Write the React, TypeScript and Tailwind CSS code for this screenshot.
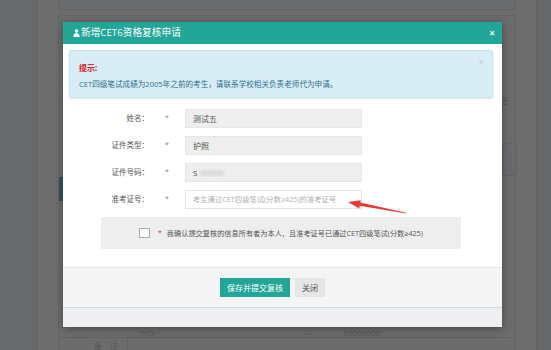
import React from "react";

const font = "font-['Open_Sans','Noto_Sans_CJK_SC',sans-serif]";

function UserIcon() {
  return (
    <svg width="7" height="8" viewBox="0 0 7 8" className="shrink-0">
      <circle cx="3.5" cy="2" r="1.8" fill="#ffffff" />
      <path d="M0.3 8 C0.3 5.2 1.6 4 3.5 4 C5.4 4 6.7 5.2 6.7 8 Z" fill="#ffffff" />
    </svg>
  );
}

function Arrow() {
  return (
    <svg width="75" height="20" viewBox="0 0 75 20" className="absolute left-[345px] top-[198px]">
      <polygon points="3,4 15.8,2.2 14.2,10.4" fill="#e53935" />
      <polygon points="15,4.6 14.4,7.8 61,15.6 61,14.8" fill="#e53935" />
    </svg>
  );
}

function FormRow({ label, value, placeholder }: { label: string; value?: string; placeholder?: string }) {
  return (
    <div className="flex h-[19px] items-center">
      <span className="w-[80px] text-right text-[7.5px] text-[#555]">{label}：</span>
      <span className="w-[36px] pl-[16px] text-[7px] text-[#888]">*</span>
      <div
        className={`flex h-[19px] w-[177px] items-center overflow-hidden whitespace-nowrap border px-[7px] ${
          placeholder ? "border-[#e3e3e3] bg-white text-[7.3px] text-[#b0b0b0]" : "border-[#e6e6e6] bg-[#eeeeee] text-[8px] text-[#555]"
        }`}
      >
        {value === "S" ? (
          <span className="flex items-center">
            S<span className="ml-[3px] h-[6px] w-[24px] rounded-full bg-[#dcdcdc] blur-[1px]" />
          </span>
        ) : (
          value ?? placeholder
        )}
      </div>
    </div>
  );
}

function Modal() {
  return (
    <div className="absolute left-[63px] top-[22px] flex h-[305px] w-[439px] flex-col bg-white shadow-[0_2px_8px_rgba(0,0,0,0.35)]">
      {/* header */}
      <div className="flex h-[22px] items-center bg-[#22a697] pl-[10px] pr-[7px] text-white">
        <UserIcon />
        <span className="ml-[1px] text-[9.7px] leading-none">新增CET6资格复核申请</span>
        <span className="ml-auto text-[10px] font-bold leading-none">×</span>
      </div>

      {/* body */}
      <div className="flex h-[223px] flex-col px-[6px] pr-[9px] pt-[6px]">
        <div className="relative h-[48px] rounded-[2px] border border-[#c4e4ef] bg-[#d9edf7] pl-[9px] shadow-[0_1px_2px_rgba(0,0,0,0.12)]">
          <div className="pt-[11px] text-[8px] font-bold leading-[12px] text-[#e02525]">提示:</div>
          <div className="pt-[4px] text-[7.6px] leading-[12px] text-[#31708f]">
            CET四级笔试成绩为2005年之前的考生，请联系学校相关负责老师代为申请。
          </div>
          <span className="absolute right-[8px] top-[4px] text-[9px] text-[#b8c8d0]">×</span>
        </div>

        <div className="mt-[11px] flex flex-col gap-[8px]">
          <FormRow label="姓名" value="测试五" />
          <FormRow label="证件类型" value="护照" />
          <FormRow label="证件号码" value="S" />
          <FormRow label="准考证号" placeholder="考生通过CET四级笔试(分数≥425)的准考证号" />
        </div>

        <div className="ml-[32px] mt-[8px] flex h-[32px] w-[360px] items-center bg-[#eeeeee] pl-[38px]">
          <span className="h-[10px] w-[11px] border border-[#aaaaaa] bg-white" />
          <span className="ml-[8px] text-[7px] text-[#e53935]">*</span>
          <span className="ml-[5px] text-[7.2px] text-[#555]">
            我确认提交复核的信息所有者为本人，且准考证号已通过CET四级笔试(分数≥425)
          </span>
        </div>
      </div>

      {/* footer */}
      <div className="flex h-[40px] items-center border-t border-[#e6e6e6] bg-[#f5f5f5] pl-[157px]">
        <div className="flex h-[19px] w-[70px] items-center justify-center bg-[#22a697] text-[8px] text-white">
          保存并提交复核
        </div>
        <div className="ml-[5px] flex h-[19px] w-[30px] items-center justify-center bg-[#e6e6e6] text-[8px] text-[#555]">
          关闭
        </div>
      </div>
      <div className="h-[1px] bg-[#bfe3df]" />
      <div className="flex-1 bg-[#efeff1]" />
    </div>
  );
}

function Background() {
  return (
    <div className="flex h-[350px] w-[551px]">
      <div className="w-[37px] bg-[#68696c]" />
      <div className="w-[21px] border-l border-[#616264] bg-[#6e6e6f]" />
      <div className="relative flex w-[458px] flex-col bg-[#6c6c6d]">
        <div className="h-[10px] border-x border-b border-[#656566] bg-[#6a6b6e]" />
        <div className="mt-[5px] flex flex-1 flex-col border-x border-t border-[#656566]">
          <div className="h-[90px]" />
          <div className="flex h-[33px] justify-end">
            <div className="mr-[-2px] mt-[37px] h-[33px] w-[15px] rounded-[3px] border border-[#626366] bg-[#686a6e]" />
          </div>
          <div className="h-[38px]" />
          <div className="flex h-[24px]">
            <div className="h-[24px] w-[5px] bg-[#34535e]" />
          </div>
          <div className="flex-1" />
          <div className="flex h-[12px] items-end text-[8px] leading-none text-[#555658]">
            <span className="ml-[81px]">TIOI</span>
            <span className="ml-[150px]">—</span>
            <span className="ml-[30px]">33000000</span>
          </div>
          <div className="flex h-[13px] border-t border-[#626263] text-[8px] text-[#58595b]">
            <span className="ml-[35px] pt-[2px]">备　注</span>
            <span className="ml-[9px] border-l border-[#626263]" />
          </div>
        </div>
        <span className="absolute right-[8px] top-[95px] text-[8px] text-[#4e4f51]">田</span>
      </div>
      <div className="w-[20px] bg-[#6e6e6f]" />
      <div className="w-[15px] border-l border-[#636466] bg-[#67686b]" />
    </div>
  );
}

export default function App() {
  return (
    <div className={`relative h-[350px] w-[551px] overflow-hidden ${font}`}>
      <Background />
      <Modal />
      <Arrow />
    </div>
  );
}
